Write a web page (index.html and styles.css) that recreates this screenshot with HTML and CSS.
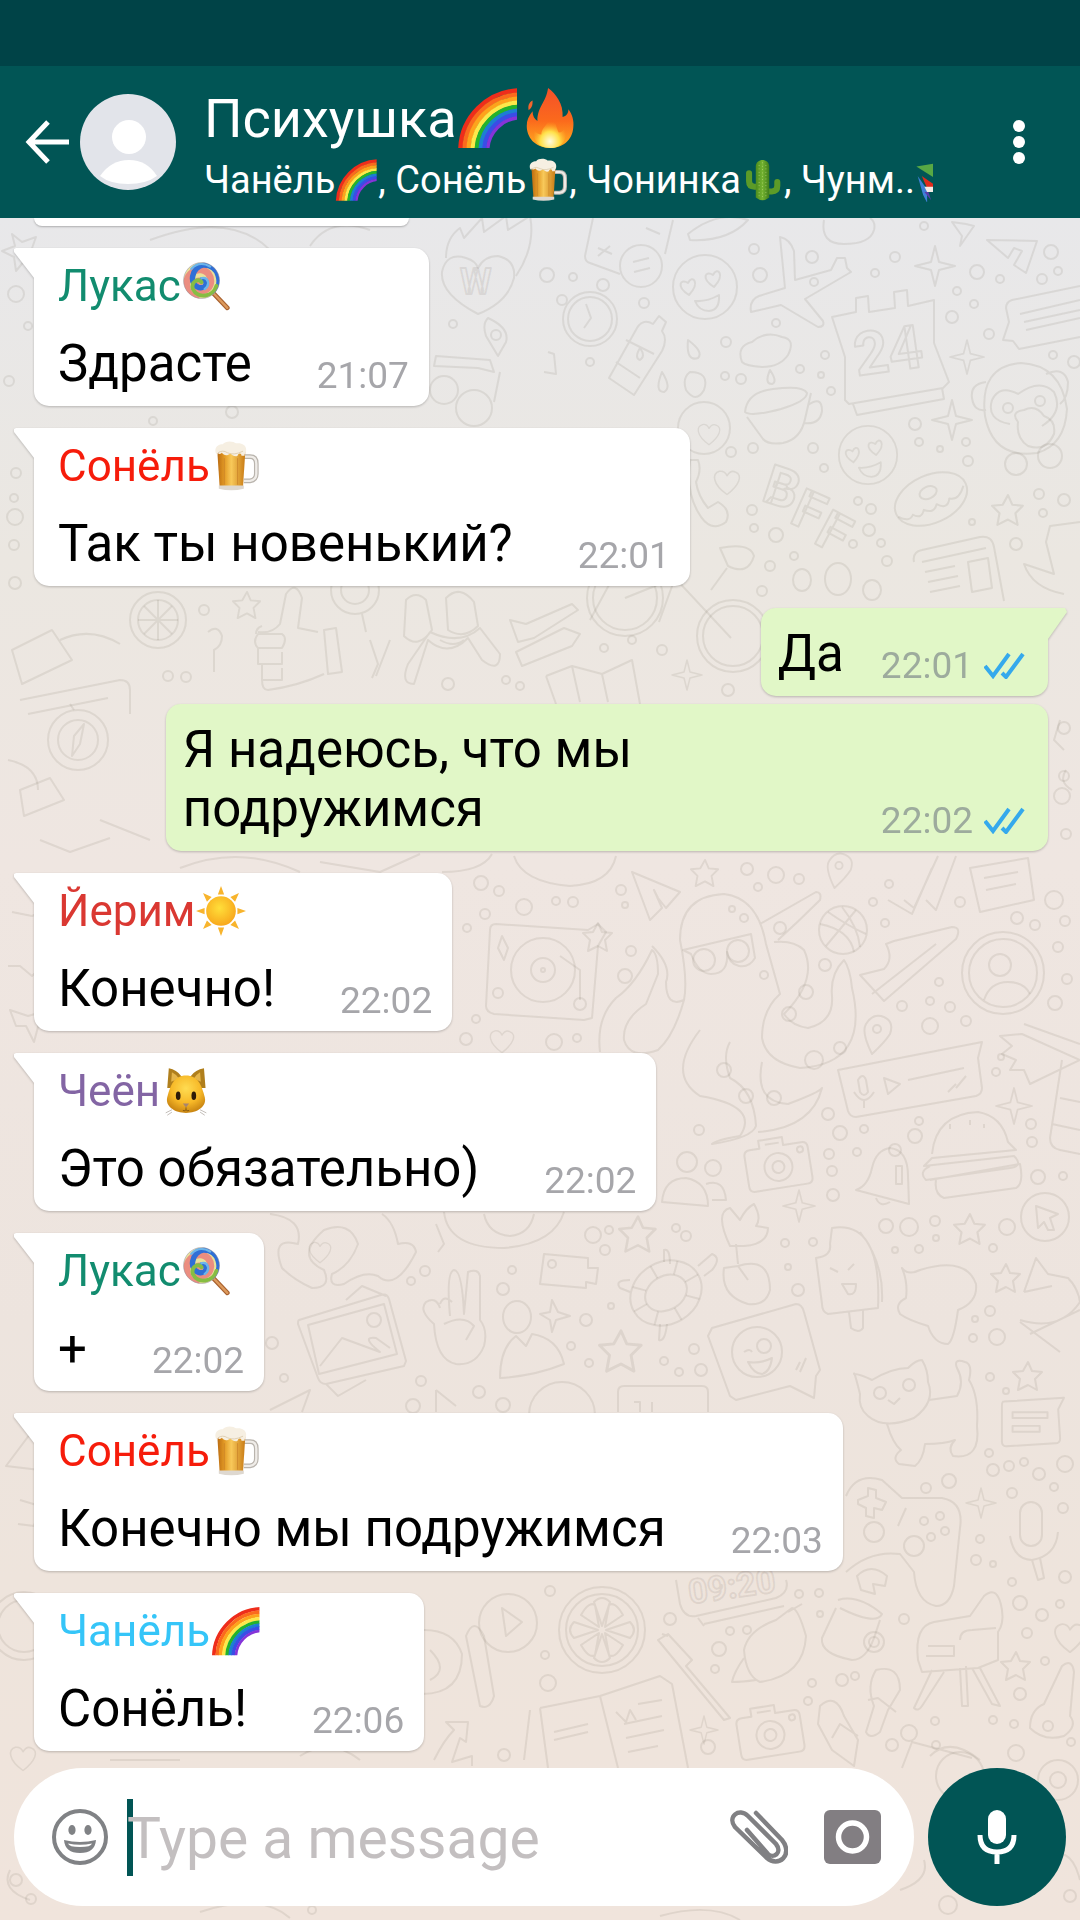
FILE: index.html
```html
<!DOCTYPE html>
<html lang="ru">
<head>
  <meta charset="UTF-8">
  <meta name="viewport" content="width=device-width, initial-scale=1">
  <title>Психушка</title>
  <link rel="stylesheet" href="styles.css">
</head>
<body>
  <!-- emoji -->
  <svg class="sprite" aria-hidden="true">
    <defs>
      <linearGradient id="fireGrad" x1="0" y1="0" x2="0" y2="1">
        <stop offset="0" stop-color="#f4502a"/><stop offset="0.55" stop-color="#fb6a1c"/><stop offset="1" stop-color="#ffb020"/>
      </linearGradient>
      <radialGradient id="fireCore" cx="0.5" cy="0.8" r="0.6">
        <stop offset="0" stop-color="#fffbe0"/><stop offset="0.5" stop-color="#ffe14a"/><stop offset="1" stop-color="#ff9a1e" stop-opacity="0"/>
      </radialGradient>
      <linearGradient id="beerGrad">
        <stop offset="0" stop-color="#b96a12"/><stop offset="0.25" stop-color="#e39a24"/><stop offset="0.5" stop-color="#f8c95a"/><stop offset="1" stop-color="#c87a14"/>
      </linearGradient>
      <radialGradient id="sunGrad" cx="0.45" cy="0.4" r="0.6">
        <stop offset="0" stop-color="#ffdf3a"/><stop offset="1" stop-color="#f8a81c"/>
      </radialGradient>
      <radialGradient id="catGrad" cx="0.5" cy="0.35" r="0.65">
        <stop offset="0" stop-color="#ffdc52"/><stop offset="0.6" stop-color="#f7b827"/><stop offset="1" stop-color="#c98512"/>
      </radialGradient>
      <linearGradient id="cactusGrad">
        <stop offset="0" stop-color="#4d8c1e"/><stop offset="0.5" stop-color="#74b331"/><stop offset="1" stop-color="#3f7d1a"/>
      </linearGradient>
      <clipPath id="bowClip"><path d="M0 0h62v63H0z"/></clipPath>
      <clipPath id="candyClip"><circle cx="25" cy="25" r="23"/></clipPath>
    </defs>
    <symbol id="rainbow" viewBox="0 0 64 64">
      <g clip-path="url(#bowClip)" fill="none" stroke-width="4.6">
        <circle cx="66" cy="66" r="62.5" stroke="#ee2d1b"/>
        <circle cx="66" cy="66" r="58.2" stroke="#fb6a1d"/>
        <circle cx="66" cy="66" r="54" stroke="#fda31c"/>
        <circle cx="66" cy="66" r="49.8" stroke="#fde84a"/>
        <circle cx="66" cy="66" r="45.6" stroke="#24b32b"/>
        <circle cx="66" cy="66" r="41.6" stroke="#1c7fd2"/>
        <circle cx="66" cy="66" r="37.8" stroke="#3a4de6"/>
        <circle cx="66" cy="66" r="34.2" stroke="#8534d8" stroke-width="3.4"/>
      </g>
    </symbol>
    <symbol id="fire" viewBox="0 0 64 64">
      <path fill="url(#fireGrad)" d="M31 63C16 62 8 52 8 40c0-6 2-10 6-15 0 5 2 8 5 10C19 20 28 16 30 1c8 6 16 16 15 30 4-1 6-4 6-8 4 5 6 12 5 19-1 13-11 21-25 21z"/>
      <path fill="#f4652c" d="M10 24c-1-4 0-8 4-10 0 4 0 7-4 10z"/>
      <path fill="url(#fireCore)" d="M32 63c-13 0-18-9-16-18 2 3 4 4 7 4 0-7 8-10 9-20 7 7 6 13 9 18 3 0 5-2 6-5 4 11-2 21-15 21z"/>
    </symbol>
    <symbol id="beer" viewBox="0 0 64 64">
      <path fill="none" stroke="#b9b4ad" stroke-width="6" d="M42 20h8q8 0 8 9v13q0 8-8 9h-8"/>
      <path fill="none" stroke="#efece8" stroke-width="3" d="M42 20h8q8 0 8 9v13q0 8-8 9h-8"/>
      <path fill="url(#beerGrad)" d="M8 12h36l-3 46H11z"/>
      <path fill="none" stroke="#c9842a" d="M17 22v34M34 22v34"/>
      <path fill="#ded8d0" d="M10 57h32v4q-16 4-32 0z"/>
      <path fill="#f6efe2" d="M6 15C4 7 10 4 15 4c4-5 14-4 17-1 7-1 13 2 13 8 0 5-2 4-2 8h-4c0-4-4-4-5 0-3 2-7-1-9-3-5 4-9 2-11-1-2 2-5 2-6 0v3H8z"/>
      <path fill="none" stroke="#d8c7a6" d="M9 15q6-4 12 0 8 4 20-2"/>
    </symbol>
    <symbol id="cactus" viewBox="0 0 64 64">
      <path fill="none" stroke="#5c9b28" stroke-width="9" stroke-linecap="round" stroke-linejoin="round" d="M12 22v12q0 8 8 8h8M54 35v6q0 8-8 8h-8"/>
      <path fill="url(#cactusGrad)" d="M22 12c0-13 20-13 20 0v46q-10 8-20 0z"/>
      <path fill="none" stroke="#b7d67a" stroke-width="1.4" stroke-dasharray="1 4" d="M27 10v48M32 6v55M37 10v48"/>
    </symbol>
    <symbol id="mask" viewBox="0 0 64 64">
      <path fill="#58a844" d="M2 12L60 2v46z"/>
      <path fill="#3f7fd8" d="M4 26l14 20v20L12 54z"/>
      <path fill="#e02b1c" d="M10 26l26 18-18 0z"/>
      <path fill="#f3ece6" d="M14 42h30v8H18z"/>
      <path fill="#5a3ca8" d="M14 50h6l4 12z"/>
    </symbol>
    <symbol id="lollipop" viewBox="0 0 64 64">
      <path stroke="#a8612f" stroke-width="6" stroke-linecap="round" d="M40 41l18 19"/>
      <path stroke="#dd9a5c" stroke-width="3" stroke-linecap="round" d="M40 41l18 19"/>
      <g clip-path="url(#candyClip)" fill="none" stroke-linecap="round">
        <path fill="#e9e29a" d="M0 0h50v50H0z"/>
        <path stroke="#eb8d80" stroke-width="9" d="M24 26C16 24 14 36 24 38 40 39 42 14 24 11 2 12 0 42 18 48"/>
        <path stroke="#2f6fd6" stroke-width="7" d="M26 24c8 0 6 12-4 10C8 30 12 8 28 5c20 0 24 24 14 36"/>
        <path stroke="#86bd43" stroke-width="5" d="M25 27c-4-6-14 0-11 9 6 13 26 10 30-4"/>
        <path stroke="#6cb5ea" stroke-width="3" d="M25 22c8-2 12 8 4 14M12 10Q22-1 36 7"/>
      </g>
      <circle cx="25" cy="25" r="23" fill="none" stroke="#8b84a5" stroke-opacity="0.6"/>
    </symbol>
    <symbol id="sun" viewBox="0 0 64 64">
      <g fill="#f8b42c">
        <path d="M32 0l4 11h-8zM32 64l4-11h-8zM0 32l11-4v8zM64 32l-11-4v8z"/>
        <path d="M9 9l11 5-6 6zM55 9l-5 11-6-6zM9 55l5-11 6 6zM55 55l-11-5 6-6z"/>
      </g>
      <circle cx="32" cy="32" r="19" fill="url(#sunGrad)"/>
    </symbol>
    <symbol id="cat" viewBox="0 0 64 64">
      <path fill="#b07f1c" d="M8 28L10 3q10 2 16 10h12Q44 5 55 3l2 25z"/>
      <path fill="#e5b54a" d="M13 20l1-12q6 3 9 8zM51 20L50 8q-5 3-8 8z"/>
      <path fill="url(#catGrad)" d="M32 12c15 0 20 12 24 28 3 12-10 20-24 20S5 52 8 40c4-16 9-28 24-28z"/>
      <ellipse cx="22" cy="38" rx="3" ry="5.5" fill="#2d1a08"/>
      <ellipse cx="42" cy="38" rx="3" ry="5.5" fill="#2d1a08"/>
      <path fill="#a8856e" d="M28 48h8l-4 5z"/>
      <path fill="none" stroke="#6f4a12" d="M32 53v3m-4 1q3 1 4-1 1 2 4 1"/>
      <path fill="none" stroke="#b3aca5" d="M14 56l-8 4M14 59l-6 4M50 56l8 4M50 59l6 4"/>
    </symbol>
    <symbol id="checks" viewBox="0 0 41 27">
      <path fill="none" stroke="#35a9ec" stroke-width="4" d="M1 14l8 10L25 2M18 21l4 4L39 2"/>
    </symbol>

    <!-- wallpaper pieces -->
    <symbol id="star5" viewBox="-16 -16 32 32" overflow="visible">
      <path d="M0-14L4-5l10 1-7 7 2 11-9-5-10 5 2-11-7-7 10-1z"/>
    </symbol>
    <symbol id="star4" viewBox="-20 -20 40 40" overflow="visible">
      <path d="M0-20L4-4l16 4L4 4 0 20-4 4-20 0-4-4z"/>
    </symbol>
    <symbol id="love" viewBox="-34 -34 68 68" overflow="visible">
      <circle r="32"/>
      <path d="M-16 8c-14-9-8-17-1-12 4-9 13-1 1 12zM9 0C-5-9 1-17 8-12c4-9 13-1 1 12zM-10 14q12 1 24-6 1 15-10 16-10 0-14-10z"/>
    </symbol>
    <symbol id="heart" viewBox="-20 -20 40 40" overflow="visible">
      <path d="M0 18C-20 4-20-10-10-13q7-1 10 6 5-8 11-5C22-8 16 6 0 18z"/>
    </symbol>
    <symbol id="photo" viewBox="-34 -30 68 60" overflow="visible">
      <g transform="rotate(-9)">
        <path d="M-26-18h10v-8h24v8h18q6 0 6 6v30q0 6-6 6h-52q-6 0-6-6v-30q0-6 6-6z"/>
        <circle cy="3" r="14"/><circle cy="3" r="6"/><circle cx="24" cy="-11" r="3"/><path d="M-10-21h14"/>
      </g>
    </symbol>
    <symbol id="note" viewBox="-34 -26 68 52" overflow="visible">
      <path d="M-28-20l62-4-6 12 2 30q0 5-5 5l-50 3q-5 0-5-5v-36q0-5 2-5zM-19-9h36v6h-36zM-19 5h28v6h-28z"/>
    </symbol>
    <symbol id="pin" viewBox="-14 -20 28 40" overflow="visible">
      <path d="M-5 20Q-16-2-11-10-5-20 4-18q14 4 9 18Q8 8-5 20z"/><circle cy="-5" r="4"/>
    </symbol>
  </svg>

  <div class="statusbar"></div>

  <header class="header">
    <a class="back" href="#" aria-label="Назад">
      <svg viewBox="0 0 44 44" width="44" height="44"><path fill="none" stroke="#fff" stroke-width="5" d="M44 22H5M23 2L4 22l19 20"/></svg>
    </a>
    <svg class="avatar" viewBox="0 0 96 96" role="img" aria-label="Фото группы">
      <circle cx="48" cy="48" r="48" fill="#e2e4ea"/>
      <ellipse cx="49" cy="43" rx="17" ry="17" fill="#fff"/>
      <path fill="#fff" d="M20 82q11-16 29-16t28 16Q66 90 48 90T20 82z"/>
    </svg>
    <div class="group">
      <h1 class="title">Психушка<svg class="emoji"><use href="#rainbow"/></svg><svg class="emoji"><use href="#fire"/></svg></h1>
      <p class="members">Чанёль<svg class="emoji"><use href="#rainbow"/></svg>, Сонёль<svg class="emoji"><use href="#beer"/></svg>, Чонинка<svg class="emoji"><use href="#cactus"/></svg>, Чунм..<svg class="emoji"><use href="#mask"/></svg></p>
    </div>
    <button class="menu" type="button" aria-label="Меню">
      <svg viewBox="0 0 12 44" width="12" height="44" fill="#fff"><circle cx="6" cy="6" r="6"/><circle cx="6" cy="22" r="6"/><circle cx="6" cy="38" r="6"/></svg>
    </button>
  </header>

  <div class="screen">
    <svg class="wallpaper" viewBox="0 218 1080 1702" preserveAspectRatio="xMidYMin slice" aria-hidden="true">
      <!-- top -->
      <path d="M12 234l10 8 14-5-5 14 8 10-14-1-9 11-2-14-12-6 13-5zM150 240q80-30 120 10M310 246q20-30 60-16"/>
      <path d="M478 314q-38-20-36-42 4-20 24-14 10 3 12 10 6-12 20-12 18 4 16 22-6 24-36 36zM446 258q0-20 14-30l4 10 18-20 2 14 22-16 2 14 22-14q6 30-14 60"/>
      <text x="460" y="294" font-size="36">W</text>
      <path d="M488 318q22 10 18 24l-8 14-12-20q-4-12 2-18z"/><circle cx="496" cy="335" r="5"/>
      <path d="M436 356l54 4 4 12-16-4-44-2zM500 372l-6 30"/><circle cx="474" cy="408" r="18"/><circle cx="444" cy="390" r="14"/>
      <path d="M593 218l-8 38q0 6 5 7l30 11M673 220l-8 34M598 248l14 6M598 256l12-10M646 228l14 6"/><circle cx="641" cy="266" r="21"/><path d="M633 262l16-4M634 272l16-4"/>
      <path d="M688 234q30-24 60-14-20 22-58 20zM824 220q-4 24 20 24 26 0 30-14 2-8-4-12"/>
      <use href="#love" x="671" y="253" width="68" height="68"/>
      <circle cx="590" cy="319" r="27"/><circle cx="590" cy="319" r="22"/><path d="M586 304l5 14-7 10"/>
      <path d="M780 237q10 2 14 14l1 29 36-10 6-12 8 0 2 10 4 4-46 27 18 22q2 6-5 6l-37-22-30 7q-2-12 8-16l26-8z"/>
      <path d="M832 317l24-5v-14l12-2 1 16 26-4-1-16 13-2 1 16 26-6v43l15 39-6 6-94 16-4-4v-43zM853 404l4 11 87-16-2-11"/>
      <text x="857" y="376" font-size="60" transform="rotate(-8 857 376)">24</text>
      <path d="M609 378l28-50q6-10 16-4l6-8 7 6-4 9q6 8 0 20l-28 44zM626 340l28 14M616 362l24 16M640 348q-6 10 0 12 6-4 0-12z"/>
      <path d="M548 352l6 2 2 20-12-2M688 340q16 12 10 18-12 4-10-18zM662 372q10 16 2 20-10 0-2-20zM690 372q20 0 14 18-8 14-18 0-4-12 4-18zM770 370q8 12 2 14-8 0-2-14z"/>
      <path d="M742 362q-6-16 10-20 14-12 30-5 14 2 6 18-8 12-26 12-16-1-20-5z"/>
      <path d="M745 412q2-20 28-23 30-4 34 4 0 8-26 16-30 8-36 3zM747 417l16 22q5 6 20 4 18-4 22-24l6-26M808 405q14-10 14 6-2 14-18 12"/>
      <use href="#star4" x="915" y="246" width="40" height="40"/><use href="#star4" x="950" y="340" width="34" height="34"/><use href="#star4" x="932" y="400" width="40" height="40"/>
      <path d="M987 240l50 1-11 32-12-8 8-14-8-3-6 10zM952 222l10 14-2 10 14-20-8-2z"/>
      <path d="M1080 286l-68 14q-6 2-6 8l3 14-6 18 10 1 6 8 61-12M1020 314l60-14M1024 322l56-12M1026 330l54-12"/>
      <path d="M985 416q-6-50 36-53 40 2 46 46-2 36-30 44-44 6-52-37zM986 382q-16 2-14 16 2 14 14 12M1046 374q18-8 22 8 0 16-8 22M992 400q8-16 26-6 22-16 36-2 10 20-12 34M992 400q-6 20 18 24"/>
      <circle cx="1008" cy="408" r="5"/><circle cx="1040" cy="401" r="5"/><path d="M1018 422q-8-10 6-12 12-6 20 6 12 4 10 18-8 18-26 12-12-8-10-24z"/><circle cx="1016" cy="464" r="11"/><circle cx="1050" cy="456" r="12"/>
      <circle cx="704" cy="428" r="26"/><use href="#heart" x="696" y="420" width="26" height="26"/><use href="#heart" x="712" y="466" width="30" height="30"/>
      <use href="#love" x="837" y="424" width="62" height="62"/>
      <path d="M690 460h8q4 10-2 22 2 14 12 26l10-6q14 8 8 20-16 12-28-10-12-20-8-52z"/>
      <g font-size="54"><text x="760" y="500" transform="rotate(18 760 500)">B</text><text x="788" y="522" transform="rotate(24 788 522)">F</text><text x="812" y="542" transform="rotate(28 812 542)">F</text></g>
      <g transform="rotate(-24 931 499)"><ellipse cx="931" cy="499" rx="38" ry="24"/><ellipse cx="931" cy="492" rx="9" ry="6"/><path d="M894 502q8 10 14 4 6 8 12 0 8 8 14 0 8 10 14 0 8 6 18-6"/></g>
      <use href="#star5" x="991" y="493" width="34" height="34"/>
      <path d="M1080 522l-30 4-4 16 8 32-30-10q8 24 40 30M914 562q-2-10 8-12l58-13q12-2 14 10l10 54M922 562l64-14M925 572l30-6M928 582l30-6M930 592l30-6M968 562l20-4 4 30-20 4z"/>
      <path d="M590 560l28 14M590 620l26-48M720 548q30-6 34 8-6 20-26 10zM727 568l-16 22"/>
      <!-- around the first replies -->
      <circle cx="158" cy="620" r="28"/><circle cx="158" cy="620" r="20"/><path d="M158 600v40M138 620h40M144 606l28 28M172 606l-28 28"/>
      <path d="M60 640q30-14 60 4M12 650l40-20 20 30-50 24zM208 632q10-8 14 4 0 10-8 14v22"/>
      <path d="M258 632q14 2 22-8l6-30q10-14 16 4l-4 30 20 4M256 634q0-6 6-8M258 648h24q6-10 0-14l-24 0q-6 8 0 14v16h24v-12M262 664v16h20v-12M262 680q0 10 6 10 30-4 56-16M324 630l12-2 6 44-14 2z"/>
      <circle cx="355" cy="590" r="24"/><circle cx="355" cy="590" r="14"/><path d="M362 614l4 18M406 600q10-10 20 0l6 30q-14 20-28 6zM446 598q14-14 28 4l4 24q-14 14-30 4zM430 632q30 14 50-4l20 26q0 20-18 6l-14-22q-20 20-40 2l-14 44q-14 0-6-20zM440 640q14 8 24 0"/>
      <path d="M510 620l16 4 46-20 6 6-44 28-16 4zM516 652l48-24 16 6-8 12-50 20z"/>
      <circle cx="625" cy="598" r="38"/><circle cx="625" cy="598" r="32"/><circle cx="733" cy="636" r="36"/><circle cx="733" cy="636" r="30"/><path d="M625 598l50-20 56 60M675 578l-16 44"/>
      <path d="M546 676l26-10 30 8 30-14 8 44M546 676l10 28M572 666l8 36M602 674l6 28M370 640l8 24-6 14M390 640l-14 36"/>
      <use href="#star4" x="672" y="660" width="30" height="30"/><use href="#star5" x="232" y="590" width="30" height="30"/>
      <path d="M20 700l100-20q10 0 10 10v24M28 714l80-16M20 790l30-12 14 22-40 16z"/>
      <circle cx="78" cy="740" r="30"/><circle cx="78" cy="740" r="20"/><path d="M84 724l-4 20-8 12 2-20zM70 704l4 6M8 760q30 6 30 30"/>
      <path d="M40 840l30 12 40-14M100 820l50 20M1060 720l-6 20 10 10M1066 770q-8 12 6 20"/>
      <!-- middle -->
      <path d="M180 868q60-24 120 4M320 862l60 10 40-18M514 856q8 26 56 30 40-2 46-30M442 872q40 0 50-18M632 872l48 20-14 16-8-10-4-8 8 18-12 12z"/>
      <path d="M496 924l92 6 10-6 8 8-8 14-6 72-8 2-90-6q-8-2-8-8l4-76q0-6 6-6zM502 936l6 12-4 12-6-12z"/><circle cx="543" cy="970" r="32"/><circle cx="543" cy="970" r="12"/><circle cx="543" cy="970" r="2"/><path d="M560 956l20 14v30"/><circle cx="580" cy="1004" r="6"/><circle cx="498" cy="993" r="5"/>
      <use href="#star5" x="582" y="921" width="32" height="32"/><use href="#heart" x="488" y="1026" width="28" height="28"/><use href="#star5" x="690" y="858" width="30" height="30"/>
      <path d="M12 912l20 4 14-6 4 14 14 8-10 14 6 14-16 4-12 12-12-10-12 0M10 1010l18 6 14-4-8 30-8-16-10 0z"/>
      <!-- octopus -->
      <path d="M684 1000q4-20-4-60 0-44 44-46 34 4 42 50l14 50q-18 16-18 44 4 24 38 30 70-4 52-80-2-20-8-28-14 14-12 36 2 26-24 32-16-2-24-14 34-34 20-64-10-10-30-8M760 924l56-32q6 0 4 8-20 20-42 40M684 1000q-10 36-26 50-28 10-34-10-2-20 22-36l12-30q0-20-6-24-16 34-36 48-20 20-16 54M652 946q20 20 14 36 0 26 18 18M700 1030q-34 44 0 66 60 10 40 40-24 4-28 8 40-6 44-18-2-36-26-48-8-22 0-36M762 1062q-8 40 26 42 32-12 34-16-10 40-64 44"/>
      <path d="M683 950l68-16 4 24q-6 10-16 8t-12-14q2 22-16 22-12 0-20-20z"/><circle cx="704" cy="960" r="11"/><circle cx="738" cy="951" r="11"/><circle cx="732" cy="909" r="3"/><circle cx="744" cy="918" r="4"/><circle cx="764" cy="975" r="4"/>
      <circle cx="780" cy="928" r="6"/><circle cx="806" cy="992" r="7"/><circle cx="789" cy="1014" r="7"/><circle cx="814" cy="1060" r="9"/><circle cx="840" cy="1048" r="6"/><circle cx="724" cy="1070" r="7"/><circle cx="746" cy="1096" r="7"/><circle cx="774" cy="1098" r="7"/>
      <circle cx="843" cy="930" r="24"/><path d="M820 924q30 6 34 28M828 912q20 14 38 22M856 910l-30 36M842 907q16 20 18 40"/>
      <path d="M886 944l8-3 58-14q10 0 4 12l-72 62-24-26 24-6q10-10 2-25zM872 994l64-50"/>
      <circle cx="1003" cy="973" r="41"/><circle cx="1003" cy="973" r="34"/><circle cx="1000" cy="965" r="11"/><path d="M984 1000q6-18 24-18 16 0 22 12"/>
      <path d="M888 900l24 14 20-46M904 900l10 8 24-52M926 900l10 10 20-54M970 868l58-10 6 42-54 12zM984 878l34-6M986 890l30-6"/>
      <use href="#pin" x="862" y="1014" width="30" height="40"/><use href="#pin" x="826" y="852" width="26" height="36"/>
      <path d="M838 1070l144-28-4 16 4 30q0 6-6 8l-120 21q-6 0-8-6zM858 1080q5-8 8 0l2 12q-4 6-8 0zM854 1092q10 16 20 0M864 1100v8M884 1078l16 6-12 10zM908 1080l56-12M956 1088l10-12M948 1092l8-8"/>
      <path d="M1024 1024l56 20M1080 1060l-50 24-6-14-14 0 6-10-14-6 10-8-12-10 22-2zM1062 1060l-12 78q0 10 10 12l20 4M1060 1098l20 4M1052 1124l28 6"/>
      <path d="M932 1154q4-40 46-42 24 4 30 30l8 8-84 8-8 8 90-10q10 10-4 12l-84 12q-8-8 4-14M930 1180l90-16q4 20-4 24l-72 10q-10-4-8-18M950 1124v5M970 1120v5M984 1124v4"/>
      <use href="#photo" x="744" y="1134" width="68" height="60"/><use href="#star4" x="783" y="1190" width="32" height="32"/><use href="#star4" x="996" y="1088" width="36" height="36"/>
      <path d="M856 1190q12-4 16-22 4-18 18-20 18 2 18 28l1 28z"/><circle cx="895" cy="1150" r="6"/><path d="M896 1166h6v18h-6zM876 1198q4 10 14 4"/>
      <circle cx="687" cy="1162" r="10"/><circle cx="713" cy="1168" r="8"/><path d="M662 1202q2-24 24-24 22 4 22 28zM706 1184q18-6 20 16h-14"/>
      <circle cx="1045" cy="1217" r="24"/><path d="M1036 1206l22 8-8 4 4 12-6 0-4-8-6 6z"/>
      <path d="M730 1246q-16-34 0-38l10 12q6-12 14-16 8 14 2 22l12 2q0 16-24 18zM736 1244l2 20M738 1266q32-10 32 24-4 16-22 14-28-8-24-36zM738 1266l10 14"/>
      <path d="M816 1258q16-2 14-14l2-16q50-8 46 80l-50 6q-6-2-6-10zM860 1232q24 30 22 70M849 1312l2 16q8 6 12 0v-18M830 1268l8 4M854 1264l-6 6M842 1284h14q0 12-8 10z"/>
      <path d="M902 1268q6 8 18 2 46-14 56 14 2 18-18 26-4 30-10 34-14 0-20-18-20-6-28-12-6-10 6-16 2-16-4-30z"/>
      <path d="M1024 1292l12-34 12 16 20 4q10 10 12 24-20 30-60 18M1024 1292l28-6M1020 1322l40 30M1080 1310l-50 24"/>
      <path d="M270 1214q34 4 28 30-28-8-16 24 12 12 30 20 20 0 12-18-30-14 0-40 26-10 34 14-8 22-26 30-4 14 12 10 20-14 34-8 18 16 38-24-2-12-18-8-4-22-16-30"/>
      <use href="#heart" x="306" y="1238" width="28" height="26"/>
      <path d="M444 1212q4 36 60 36 50-4 60-36M484 1214q4 20 26 22 20-2 24-22M436 1224l8 20-6 8"/>
      <path d="M544 1254l44 4v10h10l-2 16-10-2v6l-46-4z"/><circle cx="552" cy="1264" r="4"/>
      <use href="#star5" x="618" y="1214" width="40" height="40"/>
      <g transform="rotate(-30 666 1293)"><ellipse cx="666" cy="1293" rx="37" ry="31"/><ellipse cx="666" cy="1293" rx="22" ry="17"/><path d="M666 1262v14M666 1310v14M629 1293h15M688 1293h15M640 1271l10 10M692 1271l-10 10M640 1315l10-10M692 1315l-10-10"/></g>
      <path d="M664 1262v-12q6-2 6 14M698 1266l14-12q10 4 0 16l-8 6M630 1280q-16 0-10 8l10 4M660 1324l-1 16q6 2 8-16"/>
      <path d="M299 1320l82-25q6-2 8 4l17 62-2 5-78 18q-6 0-8-6l-20-54q0-4 1-4zM308 1325l76-21 13 50-78 20zM320 1366l22-28 38 14q-20-16-4-14l14 10M346 1300l16-14 24 10M326 1384l12 12 28-16"/><circle cx="374" cy="1320" r="7"/>
      <path d="M450 1316q-4-44 4-46 8 0 10 44l4-42q10-4 12 4v44q8 10 4 26-8 20-28 18-20-4-22-40-16-14-8-22 10-6 14 6M440 1304q4-10 12-2M444 1324q20-10 30 2l-8 14"/>
      <ellipse cx="517" cy="1317" rx="14" ry="16"/><path d="M500 1378q0-30 16-42l10 10 6-12q26 4 32 30-30 12-64 14z"/>
      <path d="M552 1300l-2 12-10 2 10 6 2 12 4-12 14-4-12-4z"/><use href="#star5" x="598" y="1328" width="46" height="46"/>
      <path d="M712 1328l84-24q6 0 8 8l16 58-4 6-2 22-24-12-54 14-6-4-22-60zM800 1372l6-14M796 1370l4-8"/><circle cx="757" cy="1352" r="25"/><circle cx="764" cy="1346" r="7"/><path d="M744 1352q6-4 8 0M748 1362q12 2 24-4-2 14-10 16-8 0-14-12z"/>
      <circle cx="562" cy="1415" r="33"/><path d="M618 1412v-20q0-6 6-6h78q6 0 6 6v20M634 1402h6v10M652 1402v10M270 1410l40-20-8 22M436 1390v22M436 1390l20 16"/>
      <!-- bottom -->
      <path d="M860 1394q-6-24-6-20 6 0 18 6 20-12 36-12 8-8 14-8 6 10 6 22 8 20-14 36-30 12-46-2-10-8-8-22zM887 1424q6 20 14 26-10 8-2 14l16 2q8-6 10-22 20 0 30-4-8 8-2 16 28 4 24-30 2-30-8-46 4-16-4-18-12-4-8 6 8 14 0 28l-28 4"/><circle cx="880" cy="1393" r="6"/><circle cx="909" cy="1385" r="6"/><path d="M888 1400l6 4 6-6"/>
      <use href="#note" x="998" y="1394" width="66" height="54"/><use href="#star5" x="1012" y="1360" width="32" height="32"/>
      <path d="M846 1496q10-24 36-16l20 18 40 0q22 4 18 30l-6 58q-4 20-18 20-20-4-22-34l-14-18q-30-4-54 18M858 1500l10-4v-8l8 2v8l10 4-4 8-8-2v10l-8-2v-8l-8-4zM898 1526l8-18"/><circle cx="874" cy="1532" r="10"/><circle cx="914" cy="1546" r="10"/><circle cx="924" cy="1521" r="4"/><circle cx="940" cy="1516" r="4"/><circle cx="931" cy="1537" r="4"/><circle cx="945" cy="1531" r="4"/>
      <path d="M857 1576q14-14 30 0l-2 10-12-2 2 10-14-4z"/>
      <rect x="1020" y="1502" width="22" height="44" rx="11"/><path d="M1010 1536q4 24 22 24 24-4 26-28M1032 1560l6 20 6-2-4-20"/>
      <path d="M676 1580l4 24q4 14 16 12l80-18q14-6 10-18M704 1624l80-18M698 1618l6 8"/><text x="690" y="1604" font-size="34" transform="rotate(-8 690 1604)">09:20</text>
      <circle cx="602" cy="1630" r="43"/><circle cx="602" cy="1630" r="36"/><path d="M602 1626l-8-24q8-8 16 0zM602 1634l-8 24q8 8 16 0zM598 1630l-24-8q-8 8 0 16zM606 1630l24-8q8 8 0 16zM599 1627l-18-12q8-14 14-10zM605 1627l18-12q-8-14-14-10zM599 1633l-18 12q8 14 14 10zM605 1633l18 12q-8 14-14 10z"/>
      <path d="M658 1640l10-6 24 26-6 6 44 52-6 2zM662 1634l6 2M744 1650q4-20 32-30l16-12q6 0 14 28-2 40-46 46-14-6-16-32zM744 1658q-10 14-12 24 10 0 24-2M788 1612l14-8"/>
      <path d="M838 1600q20-6 44 14-6 12-42-6M836 1608l-14 30q-2 16 30 22 14 0 22-22l6-18"/><circle cx="874" cy="1642" r="10"/><circle cx="874" cy="1642" r="5"/>
      <path d="M918 1660q-4-34 16-38l36-6 14-20q14-12 18 14 2 14-4 22v28l-20 8-56 4zM960 1640q0-10 12-10l24-2M928 1646h26v10h-28M932 1670l-18 38q4 4 8-2l22-34M960 1668l2 38 6 0-2-40M980 1668l20 38-8-2-20-36"/>
      <use href="#star5" x="1000" y="1650" width="32" height="32"/><use href="#heart" x="1052" y="1618" width="36" height="36"/><use href="#star4" x="966" y="1488" width="30" height="30"/>
      <path d="M1062 1666q10-8 12 6l-4 44q8 10-6 20-20 6-34-8 0-18 14-24z"/><circle cx="1048" cy="1726" r="5"/>
      <path d="M876 1670q24-6 24 20l-12 20-8 22q-10 8-14 0l8-26q-8-20 2-36zM868 1700l10-2 18 14M820 1706q16-14 24 10l14 24-4 26-22-16-14-26zM832 1738l8-14 18 12"/>
      <use href="#photo" x="736" y="1702" width="68" height="60"/><use href="#star4" x="690" y="1716" width="28" height="28"/>
      <path d="M540 1708l60-12 60-20 12 8 16 84M600 1696l18 72M540 1708l8 60M554 1732l34-8M554 1740l34-8M616 1712l10 10 4-12 6 10M638 1704l24-4M624 1724l38-8M626 1738l38-8M628 1752l30-6"/>
      <circle cx="508" cy="1623" r="29"/><path d="M502 1608l20 14-16 14zM424 1630q30 0 38 24 0 40-40 40M466 1636q8-20 18 0l10 60q-4 14-14 10zM430 1650q20 20 0 30M434 1760q10-20 20-30l-8-8 22 0-2 20-6-4-8 24 20-6 0 10M530 1710l-6 50M110 1760h70M300 1756q30-20 60 4"/>
      <circle cx="24" cy="1626" r="34"/><circle cx="24" cy="1626" r="26"/><use href="#heart" x="8" y="1742" width="30" height="30"/>
      <path d="M6 1466l30-40 4 44zM20 1500l20 6-6 20-16-2M902 1768l10-26 60 16M930 1756q20-20 50 4"/><circle cx="960" cy="1776" r="24"/><circle cx="1058" cy="1780" r="20"/><circle cx="1058" cy="1780" r="8"/>
      <path d="M900 1890q30-10 24-30M200 1912q60-20 90 6M660 1916q50-14 80 4M10 1870q-10 20 20 30M1040 1860q30-20 40 20"/>
      <!-- bubbles between the drawings -->
      <circle cx="547" cy="275" r="7"/><circle cx="573" cy="277" r="4"/><circle cx="603" cy="285" r="6"/><circle cx="562" cy="300" r="5"/><circle cx="644" cy="303" r="5"/><circle cx="754" cy="249" r="5"/><circle cx="760" cy="275" r="7"/><circle cx="812" cy="257" r="6"/><circle cx="895" cy="257" r="5"/><circle cx="875" cy="273" r="4"/><circle cx="814" cy="282" r="4"/><circle cx="924" cy="226" r="4"/>
      <circle cx="1051" cy="252" r="7"/><circle cx="977" cy="272" r="7"/><circle cx="1000" cy="279" r="4"/><circle cx="1042" cy="279" r="5"/><circle cx="1058" cy="271" r="4"/><circle cx="952" cy="317" r="6"/><circle cx="974" cy="304" r="4"/><circle cx="989" cy="334" r="5"/><circle cx="957" cy="291" r="4"/><circle cx="726" cy="342" r="5"/><circle cx="776" cy="323" r="4"/><circle cx="825" cy="355" r="4"/>
      <circle cx="725" cy="376" r="4"/><circle cx="741" cy="379" r="5"/><circle cx="800" cy="369" r="4"/><circle cx="821" cy="375" r="3"/><circle cx="831" cy="391" r="4"/><circle cx="590" cy="362" r="4"/><circle cx="1053" cy="355" r="4"/><circle cx="1074" cy="362" r="6"/><circle cx="915" cy="424" r="6"/><circle cx="919" cy="442" r="4"/><circle cx="966" cy="442" r="4"/><circle cx="940" cy="449" r="3"/><circle cx="968" cy="461" r="5"/>
      <circle cx="731" cy="452" r="5"/><circle cx="753" cy="448" r="5"/><circle cx="813" cy="448" r="5"/><circle cx="824" cy="468" r="4"/><circle cx="752" cy="510" r="5"/><circle cx="754" cy="528" r="4"/><circle cx="776" cy="535" r="7"/><circle cx="858" cy="501" r="4"/><circle cx="871" cy="509" r="5"/><circle cx="869" cy="530" r="6"/><circle cx="881" cy="543" r="4"/><circle cx="853" cy="544" r="4"/><circle cx="972" cy="522" r="3"/><circle cx="1039" cy="494" r="5"/><circle cx="1064" cy="500" r="6"/><circle cx="1043" cy="513" r="4"/><circle cx="1016" cy="544" r="6"/>
      <circle cx="770" cy="566" r="5"/><circle cx="794" cy="556" r="4"/><circle cx="887" cy="561" r="5"/><circle cx="762" cy="591" r="5"/><ellipse cx="802" cy="580" rx="9" ry="11"/><ellipse cx="838" cy="579" rx="13" ry="16"/><ellipse cx="872" cy="590" rx="9" ry="10"/><circle cx="16" cy="294" r="8"/><circle cx="28" cy="326" r="4"/><circle cx="9" cy="381" r="5"/><circle cx="453" cy="324" r="4"/><circle cx="16" cy="473" r="5"/><circle cx="14" cy="498" r="4"/><circle cx="15" cy="517" r="8"/><circle cx="14" cy="545" r="5"/><circle cx="15" cy="583" r="6"/>
      <circle cx="232" cy="412" r="6"/><circle cx="153" cy="421" r="4"/><circle cx="204" cy="610" r="5"/><circle cx="168" cy="676" r="5"/><circle cx="186" cy="677" r="5"/><circle cx="448" cy="684" r="6"/><circle cx="506" cy="680" r="4"/><circle cx="520" cy="686" r="4"/><circle cx="604" cy="648" r="4"/><circle cx="632" cy="640" r="4"/><circle cx="662" cy="650" r="5"/><circle cx="728" cy="690" r="6"/><circle cx="1064" cy="728" r="6"/><circle cx="1064" cy="776" r="5"/><circle cx="1062" cy="796" r="8"/><circle cx="1066" cy="834" r="5"/>
      <circle cx="481" cy="883" r="7"/><circle cx="499" cy="891" r="5"/><circle cx="485" cy="914" r="5"/><circle cx="524" cy="907" r="8"/><circle cx="556" cy="901" r="4"/><circle cx="573" cy="902" r="5"/><circle cx="621" cy="890" r="5"/><circle cx="625" cy="905" r="3"/><circle cx="467" cy="928" r="4"/><circle cx="631" cy="951" r="5"/><circle cx="625" cy="976" r="7"/><circle cx="476" cy="1019" r="4"/><circle cx="466" cy="1039" r="6"/><circle cx="554" cy="1042" r="8"/><circle cx="577" cy="1038" r="4"/>
      <circle cx="747" cy="869" r="6"/><circle cx="776" cy="875" r="8"/><circle cx="799" cy="879" r="5"/><circle cx="758" cy="887" r="4"/><circle cx="873" cy="902" r="4"/><circle cx="889" cy="884" r="4"/><circle cx="885" cy="923" r="4"/><circle cx="825" cy="965" r="6"/><circle cx="960" cy="902" r="5"/><circle cx="1054" cy="900" r="9"/><circle cx="1017" cy="918" r="6"/><circle cx="1035" cy="925" r="5"/><circle cx="1065" cy="921" r="5"/><circle cx="1058" cy="947" r="5"/><circle cx="1067" cy="979" r="5"/><circle cx="1055" cy="1003" r="7"/><circle cx="939" cy="982" r="4"/><circle cx="902" cy="1006" r="5"/><circle cx="930" cy="1001" r="4"/><circle cx="950" cy="1007" r="5"/><circle cx="930" cy="1026" r="8"/><circle cx="966" cy="1021" r="5"/>
      <circle cx="828" cy="1114" r="6"/><circle cx="840" cy="1133" r="7"/><circle cx="864" cy="1129" r="4"/><circle cx="829" cy="1154" r="5"/><circle cx="857" cy="1152" r="4"/><circle cx="832" cy="1171" r="5"/><circle cx="833" cy="1195" r="6"/><circle cx="915" cy="1136" r="7"/><circle cx="919" cy="1121" r="4"/><circle cx="1031" cy="1124" r="5"/><circle cx="1032" cy="1142" r="5"/><circle cx="1038" cy="1177" r="7"/><circle cx="1063" cy="1176" r="4"/><circle cx="996" cy="1072" r="4"/><circle cx="1001" cy="1057" r="3"/><circle cx="699" cy="1130" r="5"/>
      <circle cx="886" cy="1226" r="7"/><circle cx="909" cy="1227" r="9"/><circle cx="935" cy="1221" r="5"/><circle cx="1007" cy="1227" r="8"/><use href="#star5" x="953" y="1212" width="34" height="34"/><circle cx="936" cy="1238" r="3"/><circle cx="895" cy="1250" r="3"/><circle cx="919" cy="1249" r="4"/><circle cx="993" cy="1248" r="4"/><use href="#star5" x="990" y="1262" width="32" height="32"/><circle cx="990" cy="1311" r="5"/><circle cx="975" cy="1319" r="3"/><circle cx="997" cy="1337" r="8"/><circle cx="973" cy="1338" r="4"/><circle cx="785" cy="1243" r="4"/><circle cx="813" cy="1242" r="4"/><circle cx="788" cy="1267" r="3"/><circle cx="798" cy="1290" r="6"/>
      <circle cx="593" cy="1235" r="8"/><circle cx="609" cy="1230" r="4"/><circle cx="605" cy="1250" r="5"/><circle cx="676" cy="1228" r="4"/><circle cx="686" cy="1236" r="5"/><circle cx="512" cy="1270" r="4"/><circle cx="503" cy="1289" r="6"/><circle cx="425" cy="1271" r="5"/><circle cx="411" cy="1281" r="4"/><circle cx="611" cy="1306" r="3"/><circle cx="586" cy="1320" r="6"/><circle cx="571" cy="1346" r="4"/><circle cx="589" cy="1363" r="4"/><circle cx="694" cy="1349" r="5"/><circle cx="664" cy="1361" r="4"/><circle cx="679" cy="1372" r="4"/><circle cx="701" cy="1370" r="6"/><circle cx="272" cy="1343" r="6"/><circle cx="284" cy="1378" r="4"/><circle cx="421" cy="1381" r="5"/><circle cx="413" cy="1406" r="7"/><circle cx="479" cy="1392" r="6"/><circle cx="503" cy="1405" r="7"/>
      <circle cx="990" cy="1377" r="4"/><circle cx="1006" cy="1391" r="3"/><circle cx="989" cy="1453" r="4"/><circle cx="993" cy="1470" r="6"/><circle cx="1009" cy="1466" r="5"/><circle cx="1024" cy="1462" r="4"/><circle cx="1039" cy="1474" r="6"/><circle cx="1065" cy="1464" r="8"/><circle cx="1054" cy="1487" r="4"/><circle cx="1012" cy="1493" r="5"/><circle cx="949" cy="1481" r="7"/><circle cx="926" cy="1488" r="5"/><circle cx="1063" cy="1508" r="5"/><circle cx="976" cy="1560" r="5"/><circle cx="980" cy="1539" r="4"/><circle cx="993" cy="1564" r="3"/><circle cx="1012" cy="1582" r="4"/><circle cx="1065" cy="1577" r="6"/><circle cx="1020" cy="1603" r="7"/><circle cx="1060" cy="1604" r="4"/><circle cx="1042" cy="1615" r="6"/><circle cx="1027" cy="1633" r="5"/><circle cx="1045" cy="1661" r="4"/><circle cx="1020" cy="1694" r="6"/>
      <circle cx="799" cy="1594" r="4"/><circle cx="819" cy="1593" r="4"/><circle cx="820" cy="1614" r="3"/><circle cx="904" cy="1619" r="5"/><circle cx="670" cy="1619" r="6"/><circle cx="730" cy="1631" r="4"/><circle cx="747" cy="1630" r="4"/><circle cx="719" cy="1649" r="7"/><circle cx="715" cy="1669" r="4"/><circle cx="812" cy="1683" r="4"/><circle cx="842" cy="1680" r="6"/><circle cx="855" cy="1676" r="4"/><circle cx="808" cy="1701" r="4"/><circle cx="935" cy="1721" r="4"/><circle cx="909" cy="1733" r="8"/><circle cx="892" cy="1745" r="6"/><circle cx="936" cy="1745" r="4"/><circle cx="993" cy="1720" r="4"/><circle cx="1014" cy="1724" r="4"/><circle cx="1016" cy="1753" r="8"/><circle cx="1071" cy="1742" r="4"/><circle cx="550" cy="1591" r="5"/><circle cx="545" cy="1655" r="4"/><circle cx="548" cy="1683" r="8"/><circle cx="708" cy="1747" r="7"/><circle cx="504" cy="1755" r="6"/><circle cx="16" cy="1880" r="6"/><circle cx="31" cy="1899" r="5"/><circle cx="1070" cy="1896" r="6"/><circle cx="312" cy="1910" r="4"/><circle cx="948" cy="1905" r="9"/>
    </svg>

    <main class="chat">
      <div class="cut"></div>

      <article class="message received tail">
        <h2 class="sender lukas">Лукас<svg class="emoji"><use href="#lollipop"/></svg></h2>
        <div class="row"><p class="text">Здрасте</p><time class="time">21:07</time></div>
      </article>

      <article class="message received tail">
        <h2 class="sender sonel">Сонёль<svg class="emoji"><use href="#beer"/></svg></h2>
        <div class="row"><p class="text">Так ты новенький?</p><time class="time">22:01</time></div>
      </article>

      <article class="message sent tail">
        <div class="row"><p class="text">Да</p><time class="time">22:01</time><svg class="checks"><use href="#checks"/></svg></div>
      </article>

      <article class="message sent follow">
        <div class="row"><p class="text">Я надеюсь, что мы подружимся</p><time class="time">22:02</time><svg class="checks"><use href="#checks"/></svg></div>
      </article>

      <article class="message received tail">
        <h2 class="sender yerim">Йерим<svg class="emoji"><use href="#sun"/></svg></h2>
        <div class="row"><p class="text">Конечно!</p><time class="time">22:02</time></div>
      </article>

      <article class="message received tail">
        <h2 class="sender cheen">Чеён<svg class="emoji"><use href="#cat"/></svg></h2>
        <div class="row"><p class="text">Это обязательно)</p><time class="time">22:02</time></div>
      </article>

      <article class="message received tail">
        <h2 class="sender lukas">Лукас<svg class="emoji"><use href="#lollipop"/></svg></h2>
        <div class="row"><p class="text">+</p><time class="time">22:02</time></div>
      </article>

      <article class="message received tail">
        <h2 class="sender sonel">Сонёль<svg class="emoji"><use href="#beer"/></svg></h2>
        <div class="row"><p class="text">Конечно мы подружимся</p><time class="time">22:03</time></div>
      </article>

      <article class="message received tail">
        <h2 class="sender chanel">Чанёль<svg class="emoji"><use href="#rainbow"/></svg></h2>
        <div class="row"><p class="text">Сонёль!</p><time class="time">22:06</time></div>
      </article>
    </main>

    <form class="composer">
      <div class="field">
        <button class="icon" type="button" aria-label="Emoji">
          <svg viewBox="0 0 56 56" width="56" height="56">
            <circle cx="28" cy="28" r="26" fill="none" stroke="#808285" stroke-width="4"/>
            <ellipse cx="20" cy="21" rx="3.6" ry="5" fill="#808285"/><ellipse cx="36" cy="21" rx="3.6" ry="5" fill="#808285"/>
            <path fill="#808285" d="M12 31q16 4 32 0-1 13-16 13T12 31z"/><path fill="#fff" d="M16 34.5q12 2.5 24 0-1 3.5-12 3.5t-12-3.5z"/>
          </svg>
        </button>
        <input class="input" type="text" placeholder="Type a message" aria-label="Type a message">
        <button class="icon" type="button" aria-label="Attach">
          <svg viewBox="0 0 58 54" width="58" height="54"><path fill="none" stroke="#808083" stroke-width="4.5" stroke-linecap="round" d="M26 3l26 27c12 15-4 28-15 18L5 17C-3 7 9-3 18 6l28 28c7 9-3 15-8 10L17 20"/></svg>
        </button>
        <button class="icon camera" type="button" aria-label="Camera">
          <svg viewBox="0 0 57 54" width="57" height="54"><rect width="57" height="54" rx="6" fill="#827e82"/><circle cx="28.5" cy="27" r="14" fill="none" stroke="#fff" stroke-width="5.5"/></svg>
        </button>
      </div>
      <button class="mic" type="button" aria-label="Voice message">
        <svg viewBox="0 0 40 54" width="40" height="54"><rect x="11" width="18" height="34" rx="9" fill="#fff"/><path fill="none" stroke="#fff" stroke-width="5" d="M3 25q0 17 17 17t17-17M20 42v12"/></svg>
      </button>
    </form>
  </div>
</body>
</html>
```

FILE: styles.css
```css
* { box-sizing: border-box; margin: 0; padding: 0; }
body { display: flex; flex-direction: column; min-height: 100vh; font-family: Roboto, "Noto Sans", sans-serif; color: #000; background-color: #ede4de; }
h1, h2 { font-weight: 400; }
button { border: none; background: none; cursor: pointer; }
svg { display: block; flex-shrink: 0; }
.sprite { position: absolute; width: 0; height: 0; }

/* emoji follow the text they stand in */
.emoji { display: inline-block; width: 50px; height: 50px; margin-left: 1px; vertical-align: -10px; }
.title .emoji { width: 62px; height: 64px; margin-left: 0; vertical-align: -13px; }
.members .emoji { width: 43px; height: 44px; margin-left: 0; vertical-align: -9px; }

/* header */
.statusbar { height: 66px; background-color: #004347; }
.header { display: flex; align-items: center; height: 152px; padding: 0 55px 0 25px; background-color: #015555; color: #fff; }
.back { margin-right: 11px; }
.avatar { width: 96px; height: 96px; margin-right: 28px; }
.group { flex: 1; min-width: 0; padding-top: 4px; margin-right: 80px; overflow: hidden; }
.title { height: 63px; font-size: 54px; line-height: 63px; white-space: nowrap; }
.members { height: 54px; padding-top: 9px; font-size: 38px; line-height: 44px; white-space: nowrap; }

/* wallpaper */
.screen { position: relative; flex: 1; display: flex; flex-direction: column; overflow: hidden; background: linear-gradient(#e8e8ea, #ebe7e1 20%, #efe6e1 38%, #ede4de 65%, #eee4dc 80%, #f0e4dc); }
.wallpaper { position: absolute; top: 0; left: 0; width: 100%; height: 100%; fill: none; stroke: rgba(110, 95, 85, 0.12); stroke-width: 2px; stroke-linejoin: round; font-family: Roboto, sans-serif; font-weight: 700; }

/* messages */
.chat { position: relative; flex: 1; display: flex; flex-direction: column; padding: 0 32px 17px 34px; }
.cut { width: 375px; height: 8px; background-color: #fff; border-radius: 0 0 14px 14px; box-shadow: 0 1px 2px rgba(0, 0, 0, 0.25); }
.message { position: relative; max-width: 87%; margin-top: 22px; border-radius: 15px; filter: drop-shadow(0 1px 1px rgba(0, 0, 0, 0.22)); }
.received { align-self: flex-start; padding: 12px 20px 8px 24px; background-color: #fff; border-top-left-radius: 0; }
.sent { align-self: flex-end; padding: 16px 23px 8px 17px; background-color: #e1f7c7; }
.sent.tail { border-top-right-radius: 0; }
.follow { margin-top: 8px; }
.tail::before { content: ""; position: absolute; top: 0; width: 22px; height: 31px; background-color: inherit; }
.received.tail::before { left: -20px; clip-path: polygon(2px 0, 100% 0, 100% 100%, 95% 100%, 0 4px, 0 1px); }
.sent.tail::before { right: -19px; width: 20px; clip-path: polygon(0 0, 18px 0, 100% 4px, 1px 100%, 0 100%); }

.sender { height: 52px; margin-bottom: 22px; font-size: 44px; line-height: 52px; white-space: nowrap; }
.lukas { color: #128c6f; }
.sonel { color: #f61c0b; }
.yerim { color: #da3832; }
.cheen { color: #8365a4; }
.chanel { color: #35c5f8; }

.row { display: flex; align-items: flex-end; }
.text { flex: 1; padding-bottom: 5px; margin-right: 65px; font-size: 51px; line-height: 59px; }
.time { font-size: 37px; line-height: 44px; color: #a6a6aa; }
.sent .text { margin-right: 37px; }
.sent .time { color: #9dab9d; }
.checks { width: 41px; height: 27px; margin: 0 0 9px 11px; }

/* composer */
.composer { position: relative; display: flex; gap: 14px; padding: 0 14px 14px; }
.field { flex: 1; min-width: 0; display: flex; align-items: center; height: 138px; padding: 0 33px 0 38px; background-color: #fff; border-radius: 69px; }
.input { flex: 1; min-width: 0; height: 77px; padding-top: 3px; margin: 0 19px; border: none; outline: none; font-family: inherit; font-size: 57px; color: #000; background: linear-gradient(#015555, #015555) 0 0 / 6px 100% no-repeat; }
.input::placeholder { color: #c3bfc0; opacity: 1; }
.icon { flex-shrink: 0; }
.camera { margin-left: 36px; }
.mic { flex-shrink: 0; display: flex; align-items: center; justify-content: center; width: 138px; height: 138px; background-color: #015555; border-radius: 50%; }
```
